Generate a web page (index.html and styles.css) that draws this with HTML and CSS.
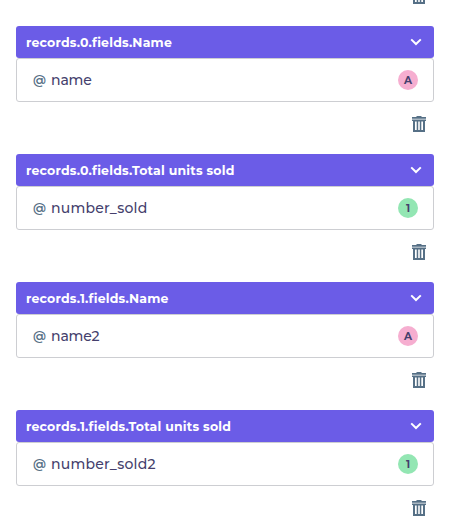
FILE: index.html
```html
<!DOCTYPE html>
<html lang="en">
<head>
<meta charset="utf-8">
<title>Field mapping</title>
<link rel="stylesheet" href="styles.css">
</head>
<body>
<svg class="defs" aria-hidden="true">
  <symbol id="trash" viewBox="0 0 14 16"><path d="M0 1h4.5V0h5v1H14v1.7H0zM0 3.4h14V5h-1v11H1V5H0zM3 5.5V14h1.7V5.5zM6.2 5.5V14h1.6V5.5zM9.3 5.5V14H11V5.5z" fill="currentColor" fill-rule="evenodd"/></symbol>
  <symbol id="chevron" viewBox="0 0 12 8"><path d="M1.2 1.4 6 6l4.8-4.6" fill="none" stroke="currentColor" stroke-width="2"/></symbol>
</svg>
<main class="list">
  <div class="actions first"><svg class="trash"><use href="#trash"/></svg></div>
  <section class="field">
    <header class="head"><span>records.0.fields.Name</span><svg class="chevron"><use href="#chevron"/></svg></header>
    <div class="row"><span class="at">@</span><span class="name short">name</span><span class="badge text">A</span></div>
    <div class="actions"><svg class="trash"><use href="#trash"/></svg></div>
  </section>
  <section class="field">
    <header class="head"><span>records.0.fields.Total units sold</span><svg class="chevron"><use href="#chevron"/></svg></header>
    <div class="row"><span class="at">@</span><span class="name">number_sold</span><span class="badge number">1</span></div>
    <div class="actions"><svg class="trash"><use href="#trash"/></svg></div>
  </section>
  <section class="field">
    <header class="head"><span>records.1.fields.Name</span><svg class="chevron"><use href="#chevron"/></svg></header>
    <div class="row"><span class="at">@</span><span class="name short">name2</span><span class="badge text">A</span></div>
    <div class="actions"><svg class="trash"><use href="#trash"/></svg></div>
  </section>
  <section class="field">
    <header class="head"><span>records.1.fields.Total units sold</span><svg class="chevron"><use href="#chevron"/></svg></header>
    <div class="row"><span class="at">@</span><span class="name">number_sold2</span><span class="badge number">1</span></div>
    <div class="actions"><svg class="trash"><use href="#trash"/></svg></div>
  </section>
</main>
</body>
</html>
```
FILE: styles.css
```css
* { box-sizing: border-box; }
body { margin: 0; height: 527px; overflow: hidden; background: #fff; color: #453f6d; font-family: Montserrat, Inter, "Liberation Sans", sans-serif; }
.defs { position: absolute; width: 0; height: 0; }
.list { padding: 0 18px 0 16px; }
.actions { height: 52px; padding: 14px 8px 0 0; display: flex; justify-content: flex-end; }
.actions.first { height: 26px; padding-top: 0; }
.actions.first .trash { margin-top: -12px; }
.trash { width: 14px; height: 16px; color: #567086; }
.field { height: 128px; }
.head { height: 32px; padding: 0 12px 0 10px; display: flex; align-items: center; justify-content: space-between; background: #6b5ce7; color: #fff; border-radius: 3px; font-size: 12.5px; font-weight: 700; letter-spacing: .21px; }
.chevron { width: 12px; height: 8px; }
.row { height: 44px; padding: 0 15px; display: flex; align-items: center; border: 1px solid #cdced2; border-radius: 3px; font-size: 14px; font-weight: 500; }
.name { letter-spacing: .22px; }
.name.short { letter-spacing: -.15px; }
.at { width: 19px; padding-left: 1px; padding-bottom: 1px; font-size: 12.5px; font-weight: 600; color: #567086; }
.badge { width: 20px; height: 20px; margin-left: auto; border-radius: 50%; display: grid; place-items: center; font-size: 10.5px; font-weight: 700; }
.text { background: #f6aed0; }
.number { background: #93e6b3; }
```
